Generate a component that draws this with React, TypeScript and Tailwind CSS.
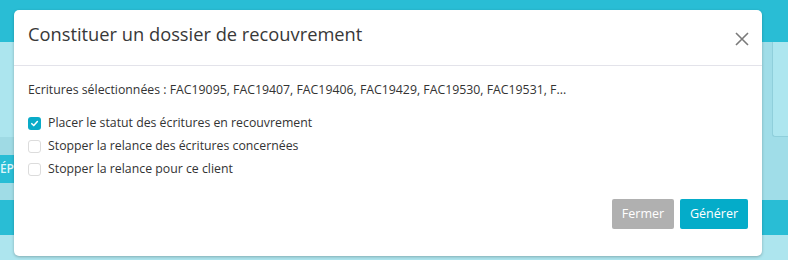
import React from "react";

const font = { fontFamily: '"Open Sans", "Noto Sans", sans-serif' };

function Check({ checked }: { checked?: boolean }) {
  if (checked) {
    return (
      <span className="flex h-[13px] w-[13px] items-center justify-center rounded-[3px] bg-[#0aabc8]">
        <svg width="9" height="9" viewBox="0 0 10 10">
          <path d="M2 5.2 L4.2 7.3 L8.2 2.9" fill="none" stroke="white" strokeWidth="1.7" strokeLinecap="round" strokeLinejoin="round" />
        </svg>
      </span>
    );
  }
  return <span className="h-[13px] w-[13px] rounded-[3px] border border-[#dcdcdc] bg-white" />;
}

export default function App() {
  return (
    <div className="relative h-[260px] w-[788px] overflow-hidden" style={font}>
      {/* background page */}
      <div className="flex h-full flex-col">
        <div className="h-[42px] bg-[#29bdd5]" />
        <div className="flex h-[158px] bg-[#a0dde8]">
          <div className="flex w-[14px] flex-col">
            <div className="h-[95px] bg-[#ace5ee]" />
            <div className="h-[18px] bg-[#9fdae4]" />
            <div className="flex h-[28px] items-center justify-end bg-[#29bdd5] text-[12px] font-semibold text-[#dff6fa]">ÉP</div>
            <div className="flex-1 bg-[#a0dce6]" />
          </div>
          <div className="flex-1" />
          <div className="ml-[10px] w-[16px]">
            <div className="h-[95px] rounded-bl-[3px] border-b border-l border-[#8fcfdb] bg-[#ade6ef]" />
          </div>
        </div>
        <div className="h-[35px] bg-[#29bdd5]" />
        <div className="flex-1 bg-[#ade5ee]" />
      </div>

      {/* modal */}
      <div className="absolute left-[14px] top-[10px] flex h-[246px] w-[748px] flex-col rounded-[5px] bg-white shadow-[0_1px_3px_rgba(0,0,0,0.25)]">
        <div className="flex h-[56px] items-center justify-between border-b border-[#e3e3ea] pl-[14px] pr-[13px]">
          <div className="mb-[8px] text-[18.3px] leading-[24px] text-[#383838]">Constituer un dossier de recouvrement</div>
          <svg width="14" height="14" viewBox="0 0 14 14" className="mt-[2px]">
            <path d="M1 1 L13 13 M13 1 L1 13" stroke="#7a7a7a" strokeWidth="1.6" />
          </svg>
        </div>
        <div className="flex flex-1 flex-col px-[14px] pt-[15px] text-[12.3px] text-[#333]">
          <div className="leading-[18px]">Ecritures sélectionnées : FAC19095, FAC19407, FAC19406, FAC19429, FAC19530, FAC19531, F...</div>
          <div className="mt-[15px] flex flex-col gap-[5px]">
            <label className="flex h-[18px] items-center gap-[7px]">
              <Check checked />
              <span>Placer le statut des écritures en recouvrement</span>
            </label>
            <label className="flex h-[18px] items-center gap-[7px]">
              <Check />
              <span>Stopper la relance des écritures concernées</span>
            </label>
            <label className="flex h-[18px] items-center gap-[7px]">
              <Check />
              <span>Stopper la relance pour ce client</span>
            </label>
          </div>
          <div className="mt-auto mb-[27px] flex justify-end gap-[6px]">
            <button className="h-[30px] w-[62px] rounded-[2px] bg-[#b0b0b0] text-[12.5px] text-white">Fermer</button>
            <button className="h-[30px] w-[68px] rounded-[2px] bg-[#04acc9] text-[12.5px] text-white">Générer</button>
          </div>
        </div>
      </div>
    </div>
  );
}
